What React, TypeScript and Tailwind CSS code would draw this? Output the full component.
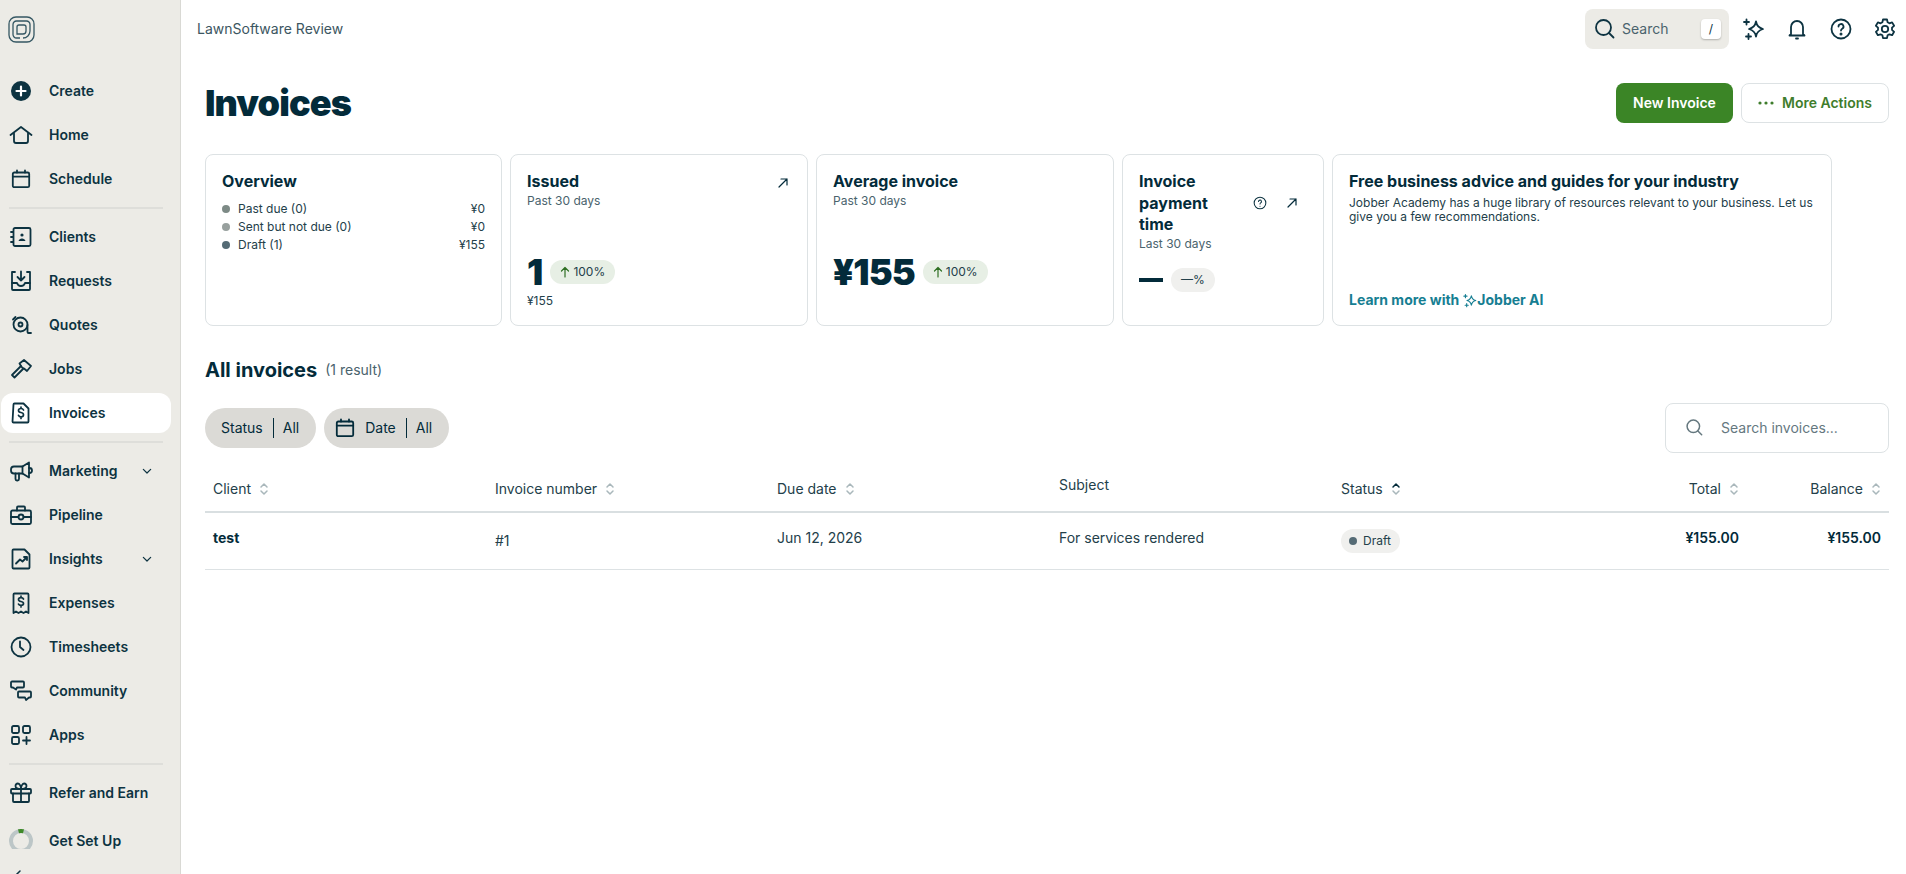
import type { ReactNode } from 'react';

function Ico({ children, size = 24, className = '' }: { children: ReactNode; size?: number; className?: string }) {
  return (
    <svg
      width={size}
      height={size}
      viewBox="0 0 24 24"
      fill="none"
      stroke="currentColor"
      strokeWidth={1.800}
      strokeLinecap="round"
      strokeLinejoin="round"
      className={`shrink-0 ${className}`}
    >
      {children}
    </svg>
  );
}

const CalendarIcon = () => (
  <Ico>
    <rect x="3.800" y="5.500" width="16.400" height="14.700" rx="1.500" />
    <path d="M3.800 9.700h16.400M8 3.500v2M16 3.500v2" />
  </Ico>
);

const SparkIcon = ({ size = 24 }: { size?: number }) => (
  <Ico size={size}>
    <path d="M15 4.500c.7 4 2.800 6.400 7 7.500-4.200 1.100-6.300 3.500-7 7.500-.7-4-2.800-6.400-7-7.500 4.200-1.100 6.300-3.500 7-7.500Z" />
    <path d="M5.500 2.500v5M3 5h5M7.500 17v5M5 19.500h5" />
  </Ico>
);

const ICONS: Record<string, ReactNode> = {
  create: (
    <Ico>
      <circle cx="12" cy="12" r="10" fill="currentColor" stroke="none" />
      <path d="M12 7.500v9M7.500 12h9" stroke="#fff" strokeWidth={2.200} />
    </Ico>
  ),
  home: (
    <Ico>
      <path d="M1.500 12 12 4l10.500 8" />
      <path d="M5 10.500V18a2 2 0 0 0 2 2h10a2 2 0 0 0 2-2v-7.500" />
    </Ico>
  ),
  schedule: <CalendarIcon />,
  clients: (
    <Ico>
      <rect x="4.500" y="3" width="17" height="18" rx="1.500" />
      <path d="M2 7h2M2 12h2M2 17h2" />
      <circle cx="13" cy="10" r="1.600" fill="currentColor" stroke="none" />
      <path d="M9.500 16c.4-1.800 1.800-2.600 3.500-2.600s3.100.8 3.500 2.600Z" fill="currentColor" stroke="none" />
    </Ico>
  ),
  requests: (
    <Ico>
      <path d="M6 3H3v17a1 1 0 0 0 1 1h16a1 1 0 0 0 1-1V3h-3" />
      <path d="M3 14h5c.6 2 2 3 4 3s3.400-1 4-3h5" />
      <path d="M12 2.500v9M8.500 8l3.500 3.500L15.500 8" />
    </Ico>
  ),
  quotes: (
    <Ico>
      <circle cx="11.500" cy="11.500" r="7" />
      <circle cx="11.500" cy="11.500" r="2" />
      <path d="M4 6.500 6.500 4M18.500 12v7a1 1 0 0 0 1 1h2.500" />
    </Ico>
  ),
  jobs: (
    <Ico>
      <path d="M12 9 3 18l2.500 2.500 9-9" />
      <path d="M10.500 6.500 15 3l7 6-4 5-3-2.500-1.500-.5L12 9Z" />
    </Ico>
  ),
  invoices: (
    <Ico>
      <path d="M4.500 3.500a1 1 0 0 1 1-1h9l5 5v13a1 1 0 0 1-1 1h-14a1 1 0 0 1-1-1Z" />
      <path d="M14.500 9c-.4-.9-1.300-1.500-2.500-1.500-1.500 0-2.500.7-2.500 1.900s1 1.800 2.500 2.100 2.500 1 2.500 2.200-1 2.100-2.500 2.100c-1.200 0-2.100-.6-2.500-1.500M12 6v1.500M12 15.800v1.700" strokeWidth={1.700} />
    </Ico>
  ),
  marketing: (
    <Ico>
      <path d="M13.500 7.500 5 7.500a3 3 0 0 0-3 3v1a3 3 0 0 0 3 3h8.500l6.500 4V3.500Z" />
      <path d="M20 9h.5a2.500 2.500 0 0 1 0 5H20M13.500 7.500v7M6.500 14.500V20a1.500 1.500 0 0 0 1.500 1.500h.5A1.500 1.500 0 0 0 10 20v-5.500" />
    </Ico>
  ),
  pipeline: (
    <Ico>
      <rect x="2" y="7.500" width="20" height="13.500" rx="1.500" />
      <path d="M8 7.500V4.500a1 1 0 0 1 1-1h6a1 1 0 0 1 1 1v3M2 14h7.500M14.500 14H22" />
      <circle cx="12" cy="14" r="2.500" />
    </Ico>
  ),
  insights: (
    <Ico>
      <path d="M3.500 3.500a1 1 0 0 1 1-1h11l5 5v13a1 1 0 0 1-1 1h-15a1 1 0 0 1-1-1Z" />
      <path d="m7 16.500 4-4 2.500 2 4.500-4.500M15 10h3v3" />
    </Ico>
  ),
  expenses: (
    <Ico>
      <path d="M4.500 22V3.500a1 1 0 0 1 1-1h13a1 1 0 0 1 1 1V22l-2.500-1.500-2.500 1.500-2.500-1.500L9.500 22 7 20.500Z" />
      <path d="M14.500 8c-.4-.8-1.300-1.300-2.500-1.300-1.500 0-2.500.7-2.500 1.800s1 1.700 2.500 2 2.500.9 2.500 2-1 1.900-2.500 1.900c-1.200 0-2.100-.5-2.500-1.300M12 5v1.700M12 14.400V16" strokeWidth={1.700} />
    </Ico>
  ),
  timesheets: (
    <Ico>
      <circle cx="12" cy="12" r="9.500" />
      <path d="M11 6.500V12l3.500 3" />
    </Ico>
  ),
  community: (
    <Ico>
      <path d="M3 2.500h11a1 1 0 0 1 1 1v4a1 1 0 0 1-1 1H8l-1 2-3-2H3a1 1 0 0 1-1-1v-4a1 1 0 0 1 1-1Z" />
      <path d="M10 12.500h11a1 1 0 0 1 1 1v4a1 1 0 0 1-1 1h-1l-3 2.500-1-2.500h-6a1 1 0 0 1-1-1v-4a1 1 0 0 1 1-1Z" />
    </Ico>
  ),
  apps: (
    <Ico>
      <rect x="3" y="3" width="7" height="7" rx="1.500" />
      <rect x="14" y="3" width="7" height="7" rx="1.500" />
      <rect x="3" y="14" width="7" height="7" rx="1.500" />
      <path d="M17.500 14v7M14 17.500h7" />
    </Ico>
  ),
  gift: (
    <Ico>
      <rect x="2" y="8" width="20" height="4.500" rx="1" />
      <path d="M4 12.500V20a1 1 0 0 0 1 1h14a1 1 0 0 0 1-1v-7.500M12 8v13" />
      <path d="M12 8C8 8 6.500 6.500 6.500 5s1-2.500 2.300-2.500C10.500 2.500 12 5 12 8Zm0 0c4 0 5.500-1.500 5.500-3s-1-2.500-2.300-2.500C13.500 2.500 12 5 12 8Z" />
    </Ico>
  ),
};

function NavRow({ icon, label, active, caret }: { icon: string; label: string; active?: boolean; caret?: boolean }) {
  return (
    <div className={`flex h-10 shrink-0 items-center gap-4 rounded-xl pl-2 text-sm font-semibold ${active ? 'bg-white' : ''}`}>
      {ICONS[icon]}
      <span>{label}</span>
      {caret && (
        <Ico size={16} className="ml-auto mr-4">
          <path d="m6.500 9.500 5.500 5.500 5.500-5.500" />
        </Ico>
      )}
    </div>
  );
}

function Divider() {
  return <div className="mx-2 my-2 h-0.5 shrink-0 bg-[#dededa]" />;
}

function Sidebar() {
  return (
    <aside className="flex h-full w-[181px] shrink-0 flex-col overflow-hidden border-r border-[#d9d9d4] bg-[#ecebe6] pl-px pr-[9px]">
      <div className="flex h-[71px] shrink-0 items-start pl-[7px] pt-4">
        <svg width="27" height="27" viewBox="0 0 27 27" fill="none" stroke="#355763" strokeWidth={1.300}>
          <rect x="1" y="1" width="25" height="25" rx="7" />
          <path d="M12 22H8.500A3.500 3.500 0 0 1 5 18.500v-10A3.500 3.500 0 0 1 8.500 5h10A3.500 3.500 0 0 1 22 8.500V15a7 7 0 0 1-7 7" />
          <path d="M9 18V11a2 2 0 0 1 2-2h5a2 2 0 0 1 2 2v4a3 3 0 0 1-3 3Z" />
        </svg>
      </div>
      <div className="flex shrink-0 flex-col gap-1">
        <NavRow icon="create" label="Create" />
        <NavRow icon="home" label="Home" />
        <NavRow icon="schedule" label="Schedule" />
      </div>
      <Divider />
      <div className="flex shrink-0 flex-col gap-1">
        <NavRow icon="clients" label="Clients" />
        <NavRow icon="requests" label="Requests" />
        <NavRow icon="quotes" label="Quotes" />
        <NavRow icon="jobs" label="Jobs" />
        <NavRow icon="invoices" label="Invoices" active />
      </div>
      <Divider />
      <div className="flex shrink-0 flex-col gap-1">
        <NavRow icon="marketing" label="Marketing" caret />
        <NavRow icon="pipeline" label="Pipeline" />
        <NavRow icon="insights" label="Insights" caret />
        <NavRow icon="expenses" label="Expenses" />
        <NavRow icon="timesheets" label="Timesheets" />
        <NavRow icon="community" label="Community" />
        <NavRow icon="apps" label="Apps" />
      </div>
      <Divider />
      <NavRow icon="gift" label="Refer and Earn" />
      <div className="mt-2 flex h-10 shrink-0 items-center gap-4 pl-2 text-sm font-semibold">
        <div className="h-5 w-6 -translate-y-[2px] overflow-hidden">
          <svg width="24" height="24" viewBox="0 0 24 24" fill="none" strokeWidth={4}>
            <circle cx="12" cy="12" r="10" stroke="#bcc6c7" />
            <path d="M9.500 2.300a10 10 0 0 1 5 0" stroke="#3f8a2a" />
          </svg>
        </div>
        <span>Get Set Up</span>
      </div>
      <div className="shrink-0 pl-3 pt-1.5">
        <svg width="16" height="16" viewBox="0 0 16 16" fill="none" stroke="currentColor" strokeWidth={1.500} strokeLinecap="round">
          <path d="M7 4 3 8" />
        </svg>
      </div>
    </aside>
  );
}

function TopBar() {
  return (
    <header className="flex h-[58px] shrink-0 items-center justify-between pl-4 pr-[9px]">
      <span className="text-sm text-[#3c5661]">LawnSoftware Review</span>
      <div className="flex items-center">
        <div className="flex h-10 w-36 items-center rounded-lg bg-[#ecebe6] pl-2 pr-2">
          <Ico>
            <circle cx="10.500" cy="10.500" r="7.500" />
            <path d="m16 16 4.500 4.500" />
          </Ico>
          <span className="ml-[5px] text-sm text-[#4a636d]">Search</span>
          <span className="ml-auto flex h-5 w-5 items-center justify-center rounded bg-white text-xs shadow-[0_1px_2px_rgba(0,0,0,0.25)]">/</span>
        </div>
        <div className="ml-3 flex gap-5">
          <SparkIcon />
          <Ico>
            <path d="M6 17V10a6 6 0 0 1 12 0v7l1.500 1.500h-15Z" />
            <path d="M11 21.500h2" />
          </Ico>
          <Ico>
            <circle cx="12" cy="12" r="9.500" />
            <path d="M9.500 9.500a2.500 2.500 0 1 1 3.700 2.200c-.8.500-1.200 1-1.200 1.800" />
            <circle cx="12" cy="17" r="0.600" fill="currentColor" />
          </Ico>
          <Ico>
            <path d="M10 2.500h4l.6 2.800 1.800 1 2.700-.9 2 3.400-2.100 1.900v2.200l2.100 1.900-2 3.400-2.700-.9-1.800 1-.6 2.800h-4l-.6-2.800-1.800-1-2.700.9-2-3.400 2.100-1.900V10.700L2.900 8.800l2-3.400 2.700.9 1.800-1Z" />
            <circle cx="12" cy="12" r="3.200" />
          </Ico>
        </div>
      </div>
    </header>
  );
}

function Card({ children, className = '' }: { children: ReactNode; className?: string }) {
  return <div className={`rounded-lg border border-[#dde2e4] bg-white p-4 ${className}`}>{children}</div>;
}

function CardTitle({ children }: { children: ReactNode }) {
  return <h3 className="text-base font-bold leading-[21.5px] text-[#032b3a]">{children}</h3>;
}

function Trend() {
  return (
    <span className="flex h-6 items-center gap-[3px] rounded-full bg-[#e7efe5] px-2.5 text-xs text-[#23404a]">
      <svg width="10" height="12" viewBox="0 0 10 12" fill="none" stroke="#2f6f24" strokeWidth={1.200} strokeLinecap="round" strokeLinejoin="round">
        <path d="M5 11V1.500M1.500 5 5 1.500 8.500 5" />
      </svg>
      100%
    </span>
  );
}

function Arrow() {
  return (
    <svg width="10" height="10" viewBox="0 0 10 10" fill="none" stroke="#032b3a" strokeWidth={1.200} strokeLinecap="round" strokeLinejoin="round" className="shrink-0">
      <path d="M1 9 9 1M3 1h6v6" />
    </svg>
  );
}

function LegendRow({ dot, label, amount }: { dot: string; label: string; amount: string }) {
  return (
    <li className="flex h-[18px] items-center text-xs text-[#23404a]">
      <span className={`mr-2 h-2 w-2 rounded-full ${dot}`} />
      <span>{label}</span>
      <span className="ml-auto">{amount}</span>
    </li>
  );
}

function Cards() {
  return (
    <div className="mt-[31px] grid h-[172px] w-[1627px] shrink-0 grid-cols-[297px_298px_298px_202px_500px] gap-2">
      <Card>
        <CardTitle>Overview</CardTitle>
        <ul className="mt-[7px]">
          <LegendRow dot="bg-[#7d8a86]" label="Past due (0)" amount="¥0" />
          <LegendRow dot="bg-[#98a09e]" label="Sent but not due (0)" amount="¥0" />
          <LegendRow dot="bg-[#556b75]" label="Draft (1)" amount="¥155" />
        </ul>
      </Card>
      <Card className="flex flex-col">
        <div className="flex items-start justify-between">
          <div>
            <CardTitle>Issued</CardTitle>
            <p className="text-xs text-[#4a636d]">Past 30 days</p>
          </div>
          <div className="pr-[3px] pt-[7px]">
            <Arrow />
          </div>
        </div>
        <div className="mt-[45px] flex items-center gap-2">
          <span className="text-4xl font-black leading-none tracking-tight text-[#032b3a]">1</span>
          <Trend />
        </div>
        <p className="mt-[3px] text-xs text-[#23404a]">¥155</p>
      </Card>
      <Card className="flex flex-col">
        <CardTitle>Average invoice</CardTitle>
        <p className="text-xs text-[#4a636d]">Past 30 days</p>
        <div className="mt-[45px] flex items-center gap-2">
          <span className="text-4xl font-black leading-none tracking-tight text-[#032b3a]">¥155</span>
          <Trend />
        </div>
      </Card>
      <Card className="flex flex-col">
        <div className="flex items-center justify-between">
          <div className="w-[90px]">
            <CardTitle>Invoice payment time</CardTitle>
          </div>
          <div className="flex items-center gap-5 pr-2.5">
            <Ico size={14}>
              <circle cx="12" cy="12" r="10" />
              <path d="M9.500 9.500a2.500 2.500 0 1 1 3.700 2.200c-.8.500-1.200 1-1.200 1.800M12 17.500v.1" />
            </Ico>
            <Arrow />
          </div>
        </div>
        <p className="text-xs text-[#4a636d]">Last 30 days</p>
        <div className="mt-4 flex items-center gap-2">
          <span className="h-1 w-6 bg-[#032b3a]" />
          <span className="flex h-6 items-center rounded-full bg-[#f0f0ee] px-2.5 text-xs text-[#23404a]">—%</span>
        </div>
      </Card>
      <Card className="flex flex-col">
        <CardTitle>Free business advice and guides for your industry</CardTitle>
        <p className="mt-[3px] text-xs leading-[14px] text-[#23404a]">
          Jobber Academy has a huge library of resources relevant to your business. Let us give you a few recommendations.
        </p>
        <div className="-mb-[1px] mt-auto flex items-center text-sm font-bold text-[#167e92]">
          Learn more with
          <span className="ml-[3px]">
            <SparkIcon size={15} />
          </span>
          Jobber AI
        </div>
      </Card>
    </div>
  );
}

function Sort({ active }: { active?: boolean }) {
  return (
    <svg width="12" height="16" viewBox="0 0 12 16" fill="none" strokeWidth={1.500} strokeLinecap="round" strokeLinejoin="round" className="shrink-0">
      <path d="m3 6 3-3 3 3" stroke={active ? '#032b3a' : '#a9b7bb'} />
      <path d="m3 10 3 3 3-3" stroke="#a9b7bb" />
    </svg>
  );
}

const TABLE_COLS = 'grid grid-cols-[282px_282px_282px_282px_282px_132px_142px]';

function HeadCell({ label, active, right, plain }: { label: string; active?: boolean; right?: boolean; plain?: boolean }) {
  return (
    <div className={`flex items-center gap-[7px] px-2 text-sm text-[#23404a] ${right ? 'justify-end pr-[7px]' : ''} ${plain ? 'mb-2' : ''}`}>
      {label}
      {!plain && <Sort active={active} />}
    </div>
  );
}

function InvoiceTable() {
  return (
    <div className="w-[1684px] text-sm text-[#23404a]">
      <div className={`${TABLE_COLS} h-[60px] border-b-2 border-[#d9dfe1] pt-[14px]`}>
        <HeadCell label="Client" />
        <HeadCell label="Invoice number" />
        <HeadCell label="Due date" />
        <HeadCell label="Subject" plain />
        <HeadCell label="Status" active />
        <HeadCell label="Total" right />
        <HeadCell label="Balance" right />
      </div>
      <div className={`${TABLE_COLS} h-[57px] items-center border-b border-[#dde2e4]`}>
        <div className="mb-1.5 px-2 font-bold text-[#032b3a]">test</div>
        <div className="px-2">#1</div>
        <div className="mb-1.5 px-2">Jun 12, 2026</div>
        <div className="mb-1.5 px-2">For services rendered</div>
        <div className="px-2">
          <span className="inline-flex h-6 items-center gap-1.5 rounded-full bg-[#f0f0ee] pl-2 pr-[9px] text-xs">
            <span className="h-2 w-2 rounded-full bg-[#556b75]" />
            Draft
          </span>
        </div>
        <div className="mb-1.5 px-2 text-right font-semibold text-[#032b3a]">¥155.00</div>
        <div className="mb-1.5 px-2 text-right font-semibold text-[#032b3a]">¥155.00</div>
      </div>
    </div>
  );
}

function FilterPill({ label, calendar }: { label: string; calendar?: boolean }) {
  return (
    <div className={`flex h-10 items-center rounded-full bg-[#dbdad6] pr-[17px] text-sm text-[#032b3a] ${calendar ? 'pl-[9px]' : 'pl-4'}`}>
      {calendar && (
        <span className="mr-2">
          <CalendarIcon />
        </span>
      )}
      <span>{label}</span>
      <span className="ml-2.5 mr-[9px] h-5 w-px bg-[#032b3a]" />
      <span>All</span>
    </div>
  );
}

export default function App() {
  return (
    <div className="flex h-screen w-full overflow-hidden bg-white text-[#0d3341] [font-family:Inter,sans-serif]">
      <Sidebar />
      <main className="flex min-w-0 flex-1 flex-col">
        <TopBar />
        <div className="flex flex-col pl-6 pr-[17px]">
          <div className="mt-[25px] flex h-10 items-center justify-between">
            <h1 className="pb-px text-4xl font-black tracking-tight text-[#032b3a]">Invoices</h1>
            <div className="flex gap-2">
              <button className="h-10 w-[117px] rounded-lg bg-[#3b8526] text-sm font-semibold text-white">New Invoice</button>
              <button className="flex h-10 w-[148px] items-center justify-center gap-2 rounded-lg border border-[#dde2e4] bg-white text-sm font-semibold text-[#3f7d2c]">
                <svg width="16" height="4" viewBox="0 0 16 4" fill="#3f7d2c">
                  <circle cx="2" cy="2" r="1.600" />
                  <circle cx="8" cy="2" r="1.600" />
                  <circle cx="14" cy="2" r="1.600" />
                </svg>
                More Actions
              </button>
            </div>
          </div>
          <Cards />
          <div className="mt-[30px] flex h-7 items-center gap-2">
            <h2 className="text-xl font-bold text-[#032b3a]">All invoices</h2>
            <span className="text-sm text-[#4a636d]">(1 result)</span>
          </div>
          <div className="mt-[19px] flex h-[50px] items-center justify-between">
            <div className="flex gap-2">
              <FilterPill label="Status" />
              <FilterPill label="Date" calendar />
            </div>
            <div className="flex h-[50px] w-56 items-center gap-4 rounded-lg border border-[#dde2e4] pl-[19px] text-sm text-[#65787f]">
              <Ico size={20}>
                <circle cx="10" cy="10" r="7.500" />
                <path d="m15.500 15.500 4.500 4.500" />
              </Ico>
              Search invoices...
            </div>
          </div>
          <InvoiceTable />
        </div>
      </main>
    </div>
  );
}
